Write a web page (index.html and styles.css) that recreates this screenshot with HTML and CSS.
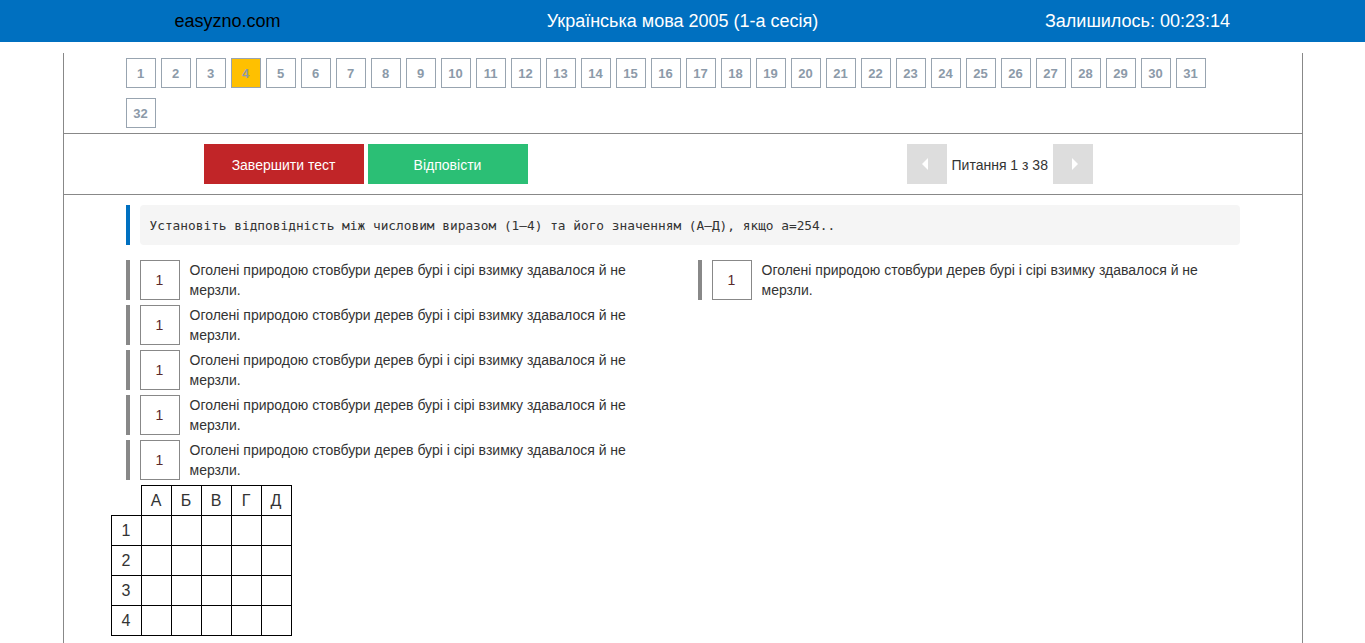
FILE: index.html
```html
<!DOCTYPE html>
<html lang="uk">
<head>
<meta charset="utf-8">
<title>easyzno.com</title>
<link rel="stylesheet" href="styles.css">
</head>
<body>
<header class="topbar">
  <div class="brand">easyzno.com</div>
  <div class="title">Українська мова 2005 (1-а сесія)</div>
  <div class="timer">Залишилось: 00:23:14</div>
</header>
<main class="page">
  <section class="pager">
    <div class="pager-list">
      <span class="num">1</span><span class="num">2</span><span class="num">3</span><span class="num active">4</span><span class="num">5</span><span class="num">6</span><span class="num">7</span><span class="num">8</span><span class="num">9</span><span class="num">10</span><span class="num">11</span><span class="num">12</span><span class="num">13</span><span class="num">14</span><span class="num">15</span><span class="num">16</span><span class="num">17</span><span class="num">18</span><span class="num">19</span><span class="num">20</span><span class="num">21</span><span class="num">22</span><span class="num">23</span><span class="num">24</span><span class="num">25</span><span class="num">26</span><span class="num">27</span><span class="num">28</span><span class="num">29</span><span class="num">30</span><span class="num">31</span><span class="num">32</span>
    </div>
  </section>
  <section class="actions">
    <div class="action-btns">
      <button class="btn btn-finish">Завершити тест</button>
      <button class="btn btn-answer">Відповісти</button>
    </div>
    <div class="qnav">
      <span class="qnav-btn"><span class="tri-left"></span></span>
      <span class="qnav-text">Питання 1 з 38</span>
      <span class="qnav-btn"><span class="tri-right"></span></span>
    </div>
  </section>
  <section class="question">
    <div class="q-head">
      <div class="q-bar"></div>
      <div class="q-text">Установіть відповідність між числовим виразом (1—4) та його значенням (А—Д), якщо a=254..</div>
    </div>
    <div class="row">
      <div class="col">
        <div class="item"><div class="item-bar"></div><div class="item-num">1</div><div class="item-text">Оголені природою стовбури дерев бурі і сірі взимку здавалося й не мерзли.</div></div>
        <div class="item"><div class="item-bar"></div><div class="item-num">1</div><div class="item-text">Оголені природою стовбури дерев бурі і сірі взимку здавалося й не мерзли.</div></div>
        <div class="item"><div class="item-bar"></div><div class="item-num">1</div><div class="item-text">Оголені природою стовбури дерев бурі і сірі взимку здавалося й не мерзли.</div></div>
        <div class="item"><div class="item-bar"></div><div class="item-num">1</div><div class="item-text">Оголені природою стовбури дерев бурі і сірі взимку здавалося й не мерзли.</div></div>
        <div class="item"><div class="item-bar"></div><div class="item-num">1</div><div class="item-text">Оголені природою стовбури дерев бурі і сірі взимку здавалося й не мерзли.</div></div>
      </div>
      <div class="col">
        <div class="item"><div class="item-bar"></div><div class="item-num">1</div><div class="item-text">Оголені природою стовбури дерев бурі і сірі взимку здавалося й не мерзли.</div></div>
      </div>
    </div>
    <table class="grid">
      <tr><td class="corner"></td><td>А</td><td>Б</td><td>В</td><td>Г</td><td>Д</td></tr>
      <tr><td>1</td><td></td><td></td><td></td><td></td><td></td></tr>
      <tr><td>2</td><td></td><td></td><td></td><td></td><td></td></tr>
      <tr><td>3</td><td></td><td></td><td></td><td></td><td></td></tr>
      <tr><td>4</td><td></td><td></td><td></td><td></td><td></td></tr>
    </table>
  </section>
</main>
</body>
</html>
```
FILE: styles.css
```css
* { box-sizing: border-box; }
html, body { margin: 0; padding: 0; background: #fff; }
body {
  font-family: "Liberation Sans", Arial, sans-serif;
  font-size: 14px;
  color: #333;
}
.topbar {
  height: 42px;
  background: #0070c0;
  display: grid;
  grid-template-columns: 1fr 1fr 1fr;
  align-items: center;
  text-align: center;
  font-size: 18px;
}
.brand { color: #000; }
.title, .timer { color: #fff; }

.page {
  width: 1240px;
  margin: 11px auto 0;
  border-left: 1px solid #888;
  border-right: 1px solid #888;
  min-height: 620px;
}
.pager {
  padding: 0 62px;
  border-bottom: 1px solid #888;
}
.pager-list { display: flex; flex-wrap: wrap; }
.num {
  width: 30px;
  height: 30px;
  margin: 5px 5px 5px 0;
  border: 1px solid #98a4b0;
  color: #8c9aa9;
  font-weight: bold;
  font-size: 13px;
  display: flex;
  align-items: center;
  justify-content: center;
}
.num.active { background: #ffc000; }

.actions {
  display: flex;
  align-items: center;
  padding: 10px 0 10px 140px;
  border-bottom: 1px solid #888;
}
.action-btns { display: flex; gap: 4px; }
.btn {
  width: 160px;
  height: 40px;
  border: 0;
  color: #fff;
  font-family: "Liberation Sans", Arial, sans-serif;
  font-size: 14px;
  padding: 2px 0 0;
}
.btn-finish { background: #c12528; }
.btn-answer { background: #2bbf75; }
.qnav {
  margin-left: 379px;
  display: flex;
  align-items: center;
  gap: 4px;
}
.qnav-btn {
  width: 40px;
  height: 40px;
  background: #dddddd;
  display: flex;
  align-items: center;
  justify-content: center;
}
.tri-left {
  width: 0; height: 0;
  border-top: 6px solid transparent;
  border-bottom: 6px solid transparent;
  border-right: 6px solid #fff;
  margin-left: -4px;
}
.tri-right {
  width: 0; height: 0;
  border-top: 6px solid transparent;
  border-bottom: 6px solid transparent;
  border-left: 6px solid #fff;
  margin-left: 4px;
}
.qnav-text { color: #333; font-size: 14px; padding: 2px 1px 0; }

.question { padding: 10px 62px 20px; }
.q-head { display: flex; gap: 10px; }
.q-bar { width: 4px; height: 40px; background: #0070c0; }
.q-text {
  flex: 1;
  height: 40px;
  background: #f5f5f5;
  border-radius: 4px;
  padding: 0 10px;
  display: flex;
  align-items: center;
  font-family: "DejaVu Sans Mono", monospace;
  font-size: 12.8px;
  color: #333;
}
.row {
  display: flex;
  margin: 15px -15px 0;
}
.col {
  width: 50%;
  padding: 0 15px;
}
.item {
  display: flex;
  gap: 10px;
  margin-bottom: 5px;
  min-height: 40px;
}
.item-bar { width: 4px; height: 40px; background: #888; flex: none; }
.item-num {
  width: 40px;
  height: 40px;
  flex: none;
  border: 1px solid #888;
  display: flex;
  align-items: center;
  justify-content: center;
  color: #5a2a2a;
  font-size: 14px;
}
.item-text { line-height: 20px; font-size: 14px; color: #333; }

.grid {
  border-collapse: collapse;
  margin-left: -15px;
}
.grid td {
  width: 30px;
  height: 30px;
  padding: 0;
  border: 1px solid #000;
  text-align: center;
  font-size: 16px;
  color: #333;
}
.grid td.corner { border-top: 0; border-left: 0; }
```
